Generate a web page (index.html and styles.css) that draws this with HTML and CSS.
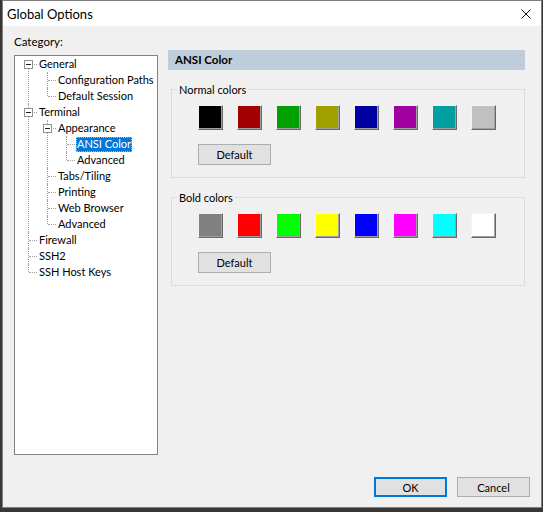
FILE: index.html
```html
<!DOCTYPE html>
<html>
<head>
<meta charset="utf-8">
<title>Global Options</title>
<link rel="stylesheet" href="styles.css">
</head>
<body>
<div class="window">
  <div class="titlebar">
    <span class="title">Global Options</span>
    <svg class="close" width="10" height="10" viewBox="0 0 10 10"><path d="M0.5 0.5L9.5 9.5M9.5 0.5L0.5 9.5" stroke="#111" stroke-width="1" fill="none"/></svg>
  </div>
  <div class="body">
    <div class="main">
      <div class="left">
        <div class="cat-label">Category:</div>
        <div class="tree">
          <ul class="tree-root">
            <li>
              <div class="row"><span class="exp"></span><span class="label">General</span></div>
              <ul>
                <li><div class="row"><span class="label">Configuration Paths</span></div></li>
                <li class="last"><div class="row"><span class="label">Default Session</span></div></li>
              </ul>
            </li>
            <li>
              <div class="row"><span class="exp"></span><span class="label">Terminal</span></div>
              <ul>
                <li>
                  <div class="row"><span class="exp"></span><span class="label">Appearance</span></div>
                  <ul>
                    <li><div class="row"><span class="label sel">ANSI Color</span></div></li>
                    <li class="last"><div class="row"><span class="label">Advanced</span></div></li>
                  </ul>
                </li>
                <li><div class="row"><span class="label">Tabs/Tiling</span></div></li>
                <li><div class="row"><span class="label">Printing</span></div></li>
                <li><div class="row"><span class="label">Web Browser</span></div></li>
                <li class="last"><div class="row"><span class="label">Advanced</span></div></li>
              </ul>
            </li>
            <li><div class="row"><span class="label">Firewall</span></div></li>
            <li><div class="row"><span class="label">SSH2</span></div></li>
            <li class="last"><div class="row"><span class="label">SSH Host Keys</span></div></li>
          </ul>
        </div>
      </div>
      <div class="right">
        <div class="header">ANSI Color</div>
        <div class="group">
          <span class="group-title">Normal colors</span>
          <div class="swatches">
            <span class="sw n0"></span><span class="sw n1"></span><span class="sw n2"></span><span class="sw n3"></span><span class="sw n4"></span><span class="sw n5"></span><span class="sw n6"></span><span class="sw n7"></span>
          </div>
          <button class="btn">Default</button>
        </div>
        <div class="group">
          <span class="group-title">Bold colors</span>
          <div class="swatches">
            <span class="sw b0"></span><span class="sw b1"></span><span class="sw b2"></span><span class="sw b3"></span><span class="sw b4"></span><span class="sw b5"></span><span class="sw b6"></span><span class="sw b7"></span>
          </div>
          <button class="btn">Default</button>
        </div>
      </div>
    </div>
    <div class="footer">
      <button class="btn btn-ok">OK</button>
      <button class="btn">Cancel</button>
    </div>
  </div>
</div>
</body>
</html>
```

FILE: styles.css
```css
* { box-sizing: border-box; }
html, body { margin: 0; padding: 0; }
body {
  width: 543px;
  height: 512px;
  overflow: hidden;
  background: #3a3634;
  font-family: Lato, "Liberation Sans", sans-serif;
  font-size: 11px;
  color: #000;
}
.window {
  margin-left: 2px;
  width: 540px;
  height: 508px;
  border: 1px solid #7f7f7f;
  background: #f0f0f0;
  display: flex;
  flex-direction: column;
}
.titlebar {
  height: 25px;
  flex: none;
  background: #fff;
  display: flex;
  align-items: center;
  justify-content: space-between;
  padding: 0 10px 0 4px;
}
.title { font-size: 13px; line-height: 16px; }
.close { display: block; }
.body {
  flex: 1;
  display: flex;
  flex-direction: column;
  padding: 0 11px 10px 11px;
}
.main { display: flex; gap: 10px; }
.left { width: 144px; flex: none; }
.cat-label { height: 29px; padding-top: 8px; line-height: 15px; font-size: 11.5px; }
.tree {
  height: 400px;
  background: #fff;
  border: 1px solid #828282;
}
.tree ul { list-style: none; margin: 0; padding: 0; }
.tree ul ul { margin-left: 19px; }
.tree li { position: relative; }
.tree li::before {
  content: "";
  position: absolute;
  left: 13px;
  top: 0;
  bottom: 0;
  border-left: 1px dotted #a0a0a0;
}
.tree li.last::before { bottom: auto; height: 8px; }
.tree-root > li:first-child::before { top: 8px; }
.row { position: relative; height: 16px; padding: 1px 0 0 23px; }
.row::before {
  content: "";
  position: absolute;
  left: 14px;
  top: 8px;
  width: 8px;
  border-top: 1px dotted #a0a0a0;
}
.exp {
  position: absolute;
  left: 9px;
  top: 4px;
  width: 9px;
  height: 9px;
  border: 1px solid #919191;
  background: #fff;
  z-index: 1;
}
.exp::after {
  content: "";
  position: absolute;
  left: 1px;
  top: 3px;
  width: 5px;
  height: 1px;
  background: #222;
}
.label {
  display: block;
  width: max-content;
  height: 15px;
  line-height: 13px;
  padding: 0 1px 2px 1px;
  white-space: nowrap;
}
.label.sel {
  background: #0078d7;
  color: #fff;
  outline: 1px dotted #8fc0ee;
  outline-offset: -1px;
}
.right { width: 357px; flex: none; padding-top: 24px; }
.header {
  height: 20px;
  background: #bfcddb;
  font-weight: bold;
  font-size: 11.5px;
  line-height: 20px;
  padding-left: 7px;
}
.group {
  position: relative;
  width: 354px;
  margin: 19px 0 0 3px;
  border: 1px solid #dcdcdc;
  padding: 15px 0 12px 26px;
}
.group-title {
  position: absolute;
  top: -7px;
  left: 5px;
  padding: 0 2px;
  line-height: 14px;
  background: #f0f0f0;
}
.swatches { display: flex; gap: 14px; }
.sw {
  width: 25px;
  height: 25px;
  border: 1px solid;
  border-color: #f4f4f4 #696969 #696969 #f4f4f4;
  box-shadow: inset -1px -1px 0 #a0a0a0;
}
.n0 { background: #000000; }
.n1 { background: #a00000; }
.n2 { background: #00a000; }
.n3 { background: #a0a000; }
.n4 { background: #0000a0; }
.n5 { background: #a000a0; }
.n6 { background: #00a0a0; }
.n7 { background: #c0c0c0; }
.b0 { background: #808080; }
.b1 { background: #ff0000; }
.b2 { background: #00ff00; }
.b3 { background: #ffff00; }
.b4 { background: #0000ff; }
.b5 { background: #ff00ff; }
.b6 { background: #00ffff; }
.b7 { background: #ffffff; }
.btn {
  display: block;
  width: 73px;
  height: 21px;
  margin-top: 14px;
  padding: 0;
  background: #e1e1e1;
  border: 1px solid #adadad;
  font: inherit;
  color: #000;
}
.footer {
  margin-top: auto;
  display: flex;
  justify-content: flex-end;
  gap: 10px;
}
.footer .btn { margin-top: 0; height: 20px; }
.btn-ok {
  border-color: #0078d7;
  box-shadow: inset 0 0 0 1px #0078d7;
}
```
